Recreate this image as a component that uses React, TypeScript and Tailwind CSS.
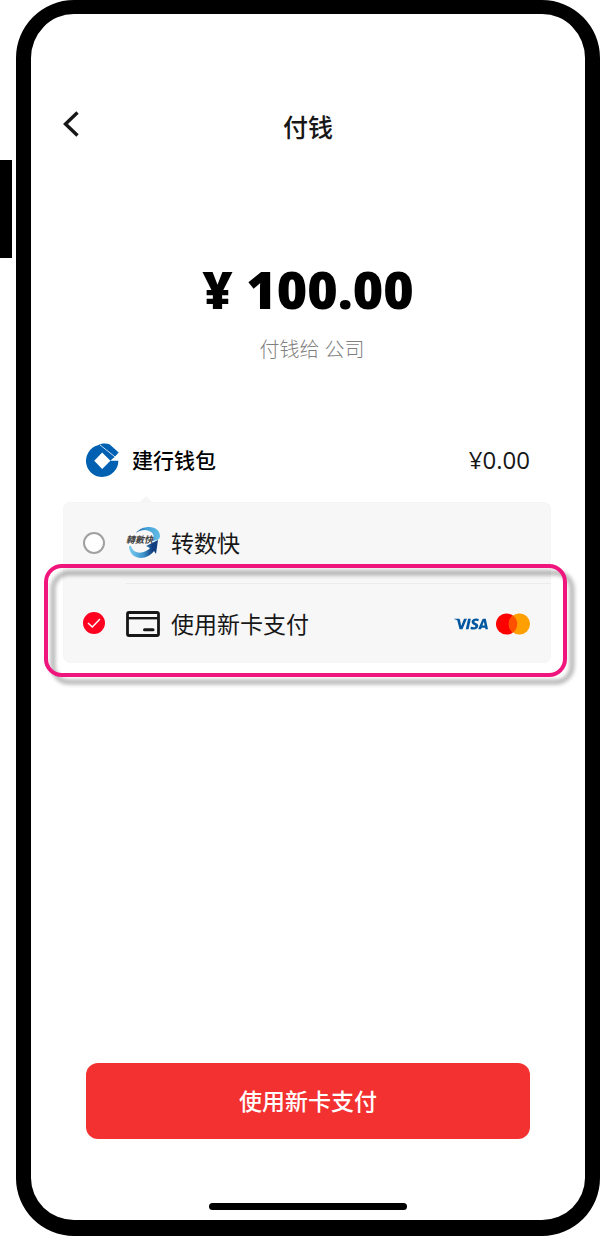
import { useState } from "react";
import { SiVisa } from "react-icons/si";

function BankLogo() {
  return (
    <svg viewBox="0 0 100 102" className="h-[34px] w-[33px]" aria-hidden="true">
      <path
        fill="#0060b1"
        fillRule="evenodd"
        d="M98 53A49 49 0 1 1 36 6C46 0 62 -1 72 4L99 28L86 43L80 47L74 53ZM49 28L25 53L49 78L74 53Z"
      />
      <path stroke="#fff" strokeWidth="2.4" d="M42 5L91 44" />
    </svg>
  );
}

function FpsLogo() {
  return (
    <svg viewBox="0 0 34 34" className="size-[34px]" aria-hidden="true">
      <defs>
        <linearGradient id="fps-top" x1="0" x2="1">
          <stop offset="0" stopColor="#1b4f93" />
          <stop offset="0.4" stopColor="#3f9fd6" />
          <stop offset="1" stopColor="#64bce6" />
        </linearGradient>
        <linearGradient id="fps-bottom" x1="0" x2="1">
          <stop offset="0" stopColor="#7cd0f2" />
          <stop offset="0.5" stopColor="#3b93cc" />
          <stop offset="0.8" stopColor="#123f80" />
        </linearGradient>
      </defs>
      <path
        fill="url(#fps-top)"
        d="M10 7C13 3 18 1 23 1C30 1 34 5 34 10C34 12 33 13 31 14L26 15C29 11 28 7 23 5C19 3 14 4 10 7Z"
      />
      <path
        fill="url(#fps-bottom)"
        d="M3 20C3 27 8 32 15 32C20 32 25 29 28 25L30 28L32 14L20 20L24 22C20 27 8 30 5 20Z"
      />
      <text
        x="0"
        y="17"
        className="fill-neutral-700 font-['Noto_Sans_CJK_TC',sans-serif] text-[9px] font-bold italic"
      >
        轉數快
      </text>
    </svg>
  );
}

function CardIcon() {
  return (
    <svg
      viewBox="0 0 34 26"
      className="h-[26px] w-[34px]"
      fill="none"
      stroke="#171717"
      aria-hidden="true"
    >
      <rect x="1.5" y="1.5" width="31" height="23" rx="1.5" strokeWidth="2.8" />
      <path d="M2 7.2H32" strokeWidth="2.4" />
      <path d="M18.5 18.7H27" strokeWidth="3" strokeLinecap="round" />
    </svg>
  );
}

function CardBrands() {
  return (
    <div className="ml-auto flex items-center gap-2">
      <SiVisa className="size-[34px] text-[#00579f]" title="VISA" />
      <svg viewBox="0 0 34 22" className="h-[22px] w-[34px]" aria-hidden="true">
        <circle cx="10.6" cy="11" r="10.6" fill="#ff0000" />
        <circle cx="23.4" cy="11" r="10.6" fill="#ff9f00" />
        <path fill="#ff5000" d="M17 2.5A10.6 10.6 0 0 1 17 19.5A10.6 10.6 0 0 1 17 2.5Z" />
      </svg>
    </div>
  );
}

const methods = [
  { id: "fps", label: "转数快", icon: <FpsLogo /> },
  { id: "card", label: "使用新卡支付", icon: <CardIcon />, brands: <CardBrands /> },
];

function App() {
  const [selected, setSelected] = useState("card");

  return (
    <div className="flex min-h-screen gap-1 bg-white font-['Open_Sans','Noto_Sans_CJK_SC',sans-serif] text-neutral-900">
      {/* SIDE BUTTON */}
      <div className="mt-40 h-[98px] w-3 shrink-0 bg-black" />

      {/* PHONE */}
      <main className="flex min-w-0 flex-1 flex-col rounded-[58px] border-x-[15px] border-t-[14px] border-b-[16px] border-black pb-[10px]">
        <header className="mt-[86px] grid h-12 grid-cols-[40px_1fr_40px] items-center px-8">
          <button type="button" aria-label="返回" className="h-full">
            <svg
              viewBox="0 0 16 26"
              className="h-[26px] w-4"
              fill="none"
              stroke="#171717"
              strokeWidth="3.4"
              aria-hidden="true"
            >
              <path d="M14.5 1.5L2.5 13L14.5 24.5" />
            </svg>
          </button>
          <h1 className="pt-[6px] text-center text-[25px] leading-10 font-medium">付钱</h1>
        </header>

        {/* AMOUNT */}
        <section className="mt-[106px] text-center">
          <p className="text-[52px] leading-[70px] font-extrabold text-black">¥ 100.00</p>
          <p className="mt-[10px] pl-2 text-[20px] leading-8 font-light text-[#808080]">
            付钱给 公司
          </p>
        </section>

        {/* WALLET */}
        <section className="mt-[77px] pr-[34px] pl-8">
          <div className="flex items-center pr-[21px] pl-[23px]">
            <BankLogo />
            <h2 className="ml-[13px] text-[21px] leading-8 font-medium text-black">
              建行钱包
            </h2>
            <span className="ml-auto text-[24px] leading-8">¥0.00</span>
          </div>

          <fieldset
            aria-label="支付方式"
            className="relative mt-[25px] rounded-lg bg-[#f7f7f7] pt-px ring-1 ring-neutral-100 ring-inset"
          >
            <svg
              viewBox="0 0 14 8"
              className="absolute -top-[7px] left-[76px] h-2 w-[14px]"
              aria-hidden="true"
            >
              <path fill="#f5f5f5" d="M0 8L7 1L14 8Z" />
            </svg>
            {methods.map((method, i) => (
              <label key={method.id} htmlFor={method.id} className="relative flex h-20 items-center pl-5">
                <input
                  id={method.id}
                  type="radio"
                  name="method"
                  checked={selected === method.id}
                  onChange={() => setSelected(method.id)}
                  className="size-[22px] shrink-0 appearance-none rounded-full border-2 border-neutral-400 bg-white checked:border-[#ff0020] checked:bg-[#ff0020]"
                />
                {selected === method.id && (
                  <svg
                    viewBox="0 0 22 22"
                    className="pointer-events-none absolute left-5 size-[22px]"
                    fill="none"
                    stroke="#fff"
                    strokeWidth="1.4"
                    aria-hidden="true"
                  >
                    <path d="M5 11L9.3 15L17 7" />
                  </svg>
                )}
                <div
                  className={`ml-[21px] flex h-full flex-1 items-center pr-[21px] ${
                    i > 0 ? "border-t border-neutral-200/60" : ""
                  }`}
                >
                  {method.icon}
                  <span className="ml-[11px] text-[23px] leading-8">{method.label}</span>
                  {method.brands}
                </div>
                {/* HIGHLIGHT */}
                {method.id === "card" && (
                  <div className="pointer-events-none absolute -top-[19px] -right-4 -bottom-[14px] -left-[19px] rounded-[18px] border-4 border-[#f0147d] drop-shadow-[7px_7px_2px_rgba(0,0,0,0.35)]" />
                )}
              </label>
            ))}
          </fieldset>
        </section>

        {/* PAY */}
        <div className="mt-auto flex flex-col items-center pt-10">
          <div className="w-full px-[55px]">
            <button
              type="button"
              className="h-[76px] w-full rounded-xl bg-[#f33131] text-[23px] font-medium text-white"
            >
              使用新卡支付
            </button>
          </div>
          <div className="mt-16 h-[7px] w-[198px] rounded-full bg-black" />
        </div>
      </main>
    </div>
  );
}

export default App;
